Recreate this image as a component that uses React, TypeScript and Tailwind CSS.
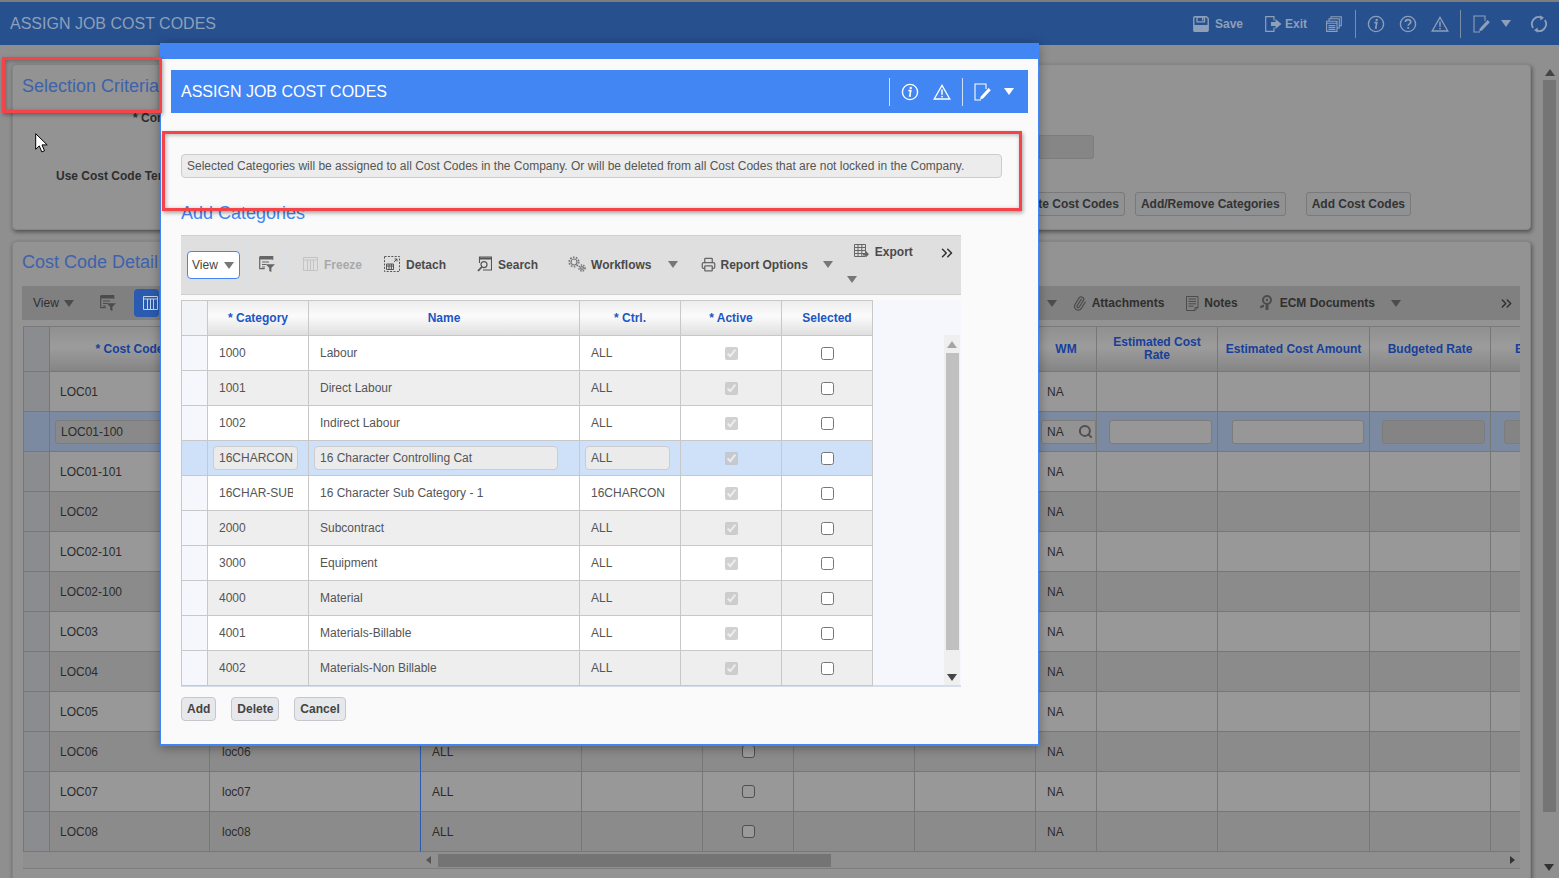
import type { ReactNode } from "react";
import { ChevronsRight, Search as SearchIcon, Paperclip, Printer } from "lucide-react";

const CATEGORIES = [
  { code: "1000", name: "Labour", ctrl: "ALL" },
  { code: "1001", name: "Direct Labour", ctrl: "ALL" },
  { code: "1002", name: "Indirect Labour", ctrl: "ALL" },
  { code: "16CHARCON", name: "16 Character Controlling Cat", ctrl: "ALL", editing: true },
  { code: "16CHAR-SUB", name: "16 Character Sub Category - 1", ctrl: "16CHARCON" },
  { code: "2000", name: "Subcontract", ctrl: "ALL" },
  { code: "3000", name: "Equipment", ctrl: "ALL" },
  { code: "4000", name: "Material", ctrl: "ALL" },
  { code: "4001", name: "Materials-Billable", ctrl: "ALL" },
  { code: "4002", name: "Materials-Non Billable", ctrl: "ALL" },
];

const COST_CODES = [
  "LOC01",
  "LOC01-100",
  "LOC01-101",
  "LOC02",
  "LOC02-101",
  "LOC02-100",
  "LOC03",
  "LOC04",
  "LOC05",
  "LOC06",
  "LOC07",
  "LOC08",
];

const BG_COLS =
  "grid grid-cols-[27px_160px_211px_161px_121px_91px_121px_121px_61px_121px_152px_121px_30px]";
const MODAL_COLS = "grid grid-cols-[27px_101px_271px_101px_101px_91px]";

function Caret({ className = "" }: { className?: string }) {
  return (
    <span
      className={
        "inline-block h-0 w-0 border-x-[5px] border-t-[7px] border-x-transparent " + className
      }
    />
  );
}

function InfoGlyph({ color }: { color: string }) {
  return (
    <svg width="18" height="18" viewBox="0 0 18 18" fill="none">
      <circle cx="9" cy="9" r="7.6" stroke={color} strokeWidth="1.4" />
      <path d="M7.4 7.6h2.4L8.7 13h1.2" stroke={color} strokeWidth="1.6" />
      <circle cx="9.7" cy="4.9" r="1.2" fill={color} />
    </svg>
  );
}

function HelpGlyph({ color }: { color: string }) {
  return (
    <svg width="18" height="18" viewBox="0 0 18 18" fill="none">
      <circle cx="9" cy="9" r="7.6" stroke={color} strokeWidth="1.4" />
      <path d="M6.4 7c0-3.2 5.4-3.2 5.4 0 0 2-2.6 1.8-2.6 3.8" stroke={color} strokeWidth="1.7" />
      <circle cx="9.2" cy="13" r="1.1" fill={color} />
    </svg>
  );
}

function WarnGlyph({ color }: { color: string }) {
  return (
    <svg width="18" height="16" viewBox="0 0 18 16" fill="none">
      <path d="M9 1.4 16.8 15H1.2Z" stroke={color} strokeWidth="1.3" />
      <path d="M9 5.5v5.2" stroke={color} strokeWidth="1.5" />
      <circle cx="9" cy="12.6" r=".9" fill={color} />
    </svg>
  );
}

function EditGlyph({ color }: { color: string }) {
  return (
    <svg width="18" height="18" viewBox="0 0 18 18" fill="none">
      <path d="M12 6V1H1v16h6" stroke={color} strokeWidth="1.1" />
      <path d="M6 16.5l1-3.2L14.6 5l2.2 2.2L9 15.5Z" fill={color} />
    </svg>
  );
}

function SaveGlyph({ color }: { color: string }) {
  return (
    <svg width="16" height="16" viewBox="0 0 16 16" fill="none">
      <path d="M.8 1.8a1 1 0 0 1 1-1h11.6l1.8 1.8v11.6a1 1 0 0 1-1 1H1.8a1 1 0 0 1-1-1Z" stroke={color} strokeWidth="1.4" />
      <path d="M4 1h7.5v4.8H4Z" stroke={color} strokeWidth="1.3" />
      <path d="M9 2h1.4v2.6H9Z" fill={color} />
      <path d="M1 9h14v6.5H1Z" fill={color} />
    </svg>
  );
}

function ExitGlyph({ color }: { color: string }) {
  return (
    <svg width="17" height="16" viewBox="0 0 17 16" fill="none">
      <path d="M9 4.5V.7H.7v14.6H9v-3.8" stroke={color} strokeWidth="1.2" />
      <path d="M6 6h4.5V3l6 5-6 5v-3H6Z" fill={color} />
    </svg>
  );
}

function WindowsGlyph({ color }: { color: string }) {
  return (
    <svg width="16" height="16" viewBox="0 0 16 16" fill="none" stroke={color} strokeWidth="1.1">
      <path d="M5 3V.7h10.3v9H13" />
      <path d="M3 5V2.8h10.3V12H11" />
      <path d="M.6 5.2H11v10.2H.6Z" />
      <path d="M.6 7.2H11M2.4 9.6h7M2.4 11.5h7M2.4 13.4h7" />
    </svg>
  );
}

function RefreshGlyph({ color }: { color: string }) {
  return (
    <svg width="18" height="18" viewBox="0 0 18 18" fill="none">
      <path d="M3.2 13A7 7 0 0 1 11 2.3" stroke={color} strokeWidth="1.8" />
      <path d="M14.8 5A7 7 0 0 1 7 15.7" stroke={color} strokeWidth="1.8" />
      <path d="M10 .2 14 2.8 10.4 5.4Z" fill={color} />
      <path d="M8 17.8 4 15.2l3.6-2.6Z" fill={color} />
    </svg>
  );
}

function FilterGlyph({ color }: { color: string }) {
  return (
    <svg width="16" height="16" viewBox="0 0 16 16" fill="none">
      <path d="M.7.7h13v3M.7.7v12h5" stroke={color} strokeWidth="1.2" />
      <path d="M.7 1h13v2.5H.7Z" fill={color} />
      <path d="M3 6h7M3 8.5h4M3 11h3" stroke={color} strokeWidth="1.2" />
      <path d="M6.5 8.2H16l-3.6 3.6V16l-2.2-1v-3.2Z" fill={color} />
    </svg>
  );
}

function FreezeGlyph({ color }: { color: string }) {
  return (
    <svg width="15" height="14" viewBox="0 0 15 14" fill="none" stroke={color}>
      <path d="M.5.5h14v13H.5Z" />
      <path d="M.5 3h14M4.5 3v10.5M7.5 3v10.5M10.5 3v10.5" />
    </svg>
  );
}

function DetachGlyph() {
  return (
    <svg width="16" height="16" viewBox="0 0 16 16" fill="none" stroke="#555">
      <path d="M.5.5h15v15H.5Z" strokeDasharray="2 1.4" />
      <path d="M2.5 8h7v5.5h-7ZM2.5 10h7M5 8v5.5M7.4 8v5.500" />
      <path d="M10 6l3-3M10.5 3H13v2.5" />
    </svg>
  );
}

function SearchGlyph() {
  return (
    <svg width="15" height="16" viewBox="0 0 15 16" fill="none" stroke="#555">
      <path d="M2.5 7V1h12v13H6" strokeWidth="1.1" />
      <path d="M2.5 2.5h12" strokeWidth="2" />
      <circle cx="7" cy="8.6" r="3" strokeWidth="1.2" />
      <path d="M4.8 11 1 15" strokeWidth="1.8" />
    </svg>
  );
}

function GearsGlyph() {
  return (
    <svg width="18" height="16" viewBox="0 0 18 16" fill="none" stroke="#777">
      <circle cx="6" cy="6" r="3" strokeWidth="1.2" />
      <circle cx="6" cy="6" r="4.8" strokeWidth="1.6" strokeDasharray="1.6 1.4" />
      <circle cx="14" cy="12" r="1.4" strokeWidth="1.2" />
      <circle cx="14" cy="12" r="3" strokeWidth="1.6" strokeDasharray="1.4 1.1" />
    </svg>
  );
}

function ExportGlyph() {
  return (
    <svg width="15" height="14" viewBox="0 0 15 14" fill="none" stroke="#666">
      <path d="M.5.5h11v12H.5Z" />
      <path d="M.5 3.5h11M.5 6.5h11M.5 9.5h11M4 .5v12M7.8 .5v12" />
      <path d="M9 9h3V7l3 3.2-3 3v-1.7H9Z" fill="#666" stroke="none" />
    </svg>
  );
}

function NotesGlyph({ color }: { color: string }) {
  return (
    <svg width="13" height="15" viewBox="0 0 13 15" fill="none" stroke={color}>
      <path d="M.5.5H12v11l-3 3H.5ZM2.5 3H10M2.5 5.4H10M2.5 7.8H10M2.5 10.2h5M9 14.5v-3h3" />
    </svg>
  );
}

function EcmGlyph({ color }: { color: string }) {
  return (
    <svg width="15" height="16" viewBox="0 0 15 16" fill="none">
      <circle cx="8" cy="5" r="4" stroke={color} strokeWidth="2" />
      <circle cx="8" cy="5" r="1.2" fill={color} />
      <path d="M6.5 8.5h3V15h-3Z" fill={color} />
      <path d="M1 11l4-1.5V12l-3.500 1.500Z" fill={color} />
    </svg>
  );
}

function ToolText({ children, muted = false }: { children: ReactNode; muted?: boolean }) {
  return (
    <span className={"text-xs font-bold whitespace-nowrap " + (muted ? "text-[#a9a9a9]" : "text-[#4a4a4a]")}>
      {children}
    </span>
  );
}

function TopBar() {
  const c = "#8e9fb9";
  return (
    <header className="flex h-[45px] items-center border-t-2 border-[#7d7d7d] bg-[#27508f] pl-[10px] text-[#8e9fb9]">
      <span className="text-base leading-none">ASSIGN JOB COST CODES</span>
      <div className="ml-auto flex items-center pr-[11px]">
        <SaveGlyph color={c} />
        <span className="ml-[6px] text-xs font-bold">Save</span>
        <span className="ml-[22px]"><ExitGlyph color={c} /></span>
        <span className="ml-[3px] text-xs font-bold">Exit</span>
        <span className="ml-[19px]"><WindowsGlyph color={c} /></span>
        <span className="ml-[13px] h-[28px] w-px bg-[#7c8ea9]" />
        <span className="ml-[11px]"><InfoGlyph color={c} /></span>
        <span className="ml-[14px]"><HelpGlyph color={c} /></span>
        <span className="ml-[14px]"><WarnGlyph color={c} /></span>
        <span className="ml-[11px] h-[28px] w-px bg-[#7c8ea9]" />
        <span className="ml-[12px]"><EditGlyph color={c} /></span>
        <Caret className="ml-[10px] border-t-[#8e9fb9]" />
        <span className="ml-[19px]"><RefreshGlyph color={c} /></span>
      </div>
    </header>
  );
}

function BgButton({ children, className = "" }: { children: ReactNode; className?: string }) {
  return (
    <span className={"flex h-[24px] items-center rounded-[3px] border border-[#7a7a7a] bg-[#8f9192] px-[5px] text-xs font-bold whitespace-nowrap text-[#333] " + className}>
      {children}
    </span>
  );
}

function SelectionPanel() {
  return (
    <section className="h-[166px] rounded-sm border border-[#858585] bg-[#939393] pl-[9px] shadow-[1px_2px_4px_rgba(0,0,0,0.45)]">
      <h2 className="pt-[10px] text-lg leading-[22px] text-[#3e62ab]">Selection Criteria</h2>
      <p className="mt-[14px] pl-[111px] text-xs leading-[14px] font-bold text-[#2e2e2e]">* Company</p>
      <div className="mt-[10px] ml-[1017px] h-[24px] w-[55px] rounded-r-[3px] border border-[#7d7d7d] bg-[#868686]" />
      <div className="mt-[10px] pl-[34px] text-xs leading-[14px] font-bold text-[#2e2e2e]">Use Cost Code Template</div>
      <div className="mt-[9px] flex items-center justify-end pr-[119px]">
        <BgButton>Delete Cost Codes</BgButton>
        <BgButton className="ml-[10px]">Add/Remove Categories</BgButton>
        <BgButton className="ml-[20px]">Add Cost Codes</BgButton>
      </div>
    </section>
  );
}

function DetailToolbar() {
  const c = "#4c4c4c";
  return (
    <div className="flex h-[34px] items-center bg-[#808080] pl-[11px] pr-[5px] text-[#2f2f2f]">
      <span className="text-xs">View</span>
      <Caret className="ml-[5px] border-t-[#4c4c4c]" />
      <span className="ml-[26px]"><FilterGlyph color={c} /></span>
      <span className="ml-[18px] flex h-[28px] w-[25px] items-center justify-center rounded-[4px] bg-[#2a5bb0] pl-[8px]">
        <FreezeGlyph color="#c8d4e8" />
      </span>
      <div className="ml-auto flex items-center">
        <Caret className="border-t-[#4c4c4c]" />
        <Paperclip size={15} color={c} className="ml-[15px] -rotate-12" />
        <span className="ml-[5px] text-xs font-bold">Attachments</span>
        <span className="ml-[22px]"><NotesGlyph color={c} /></span>
        <span className="ml-[5px] text-xs font-bold">Notes</span>
        <span className="ml-[21px]"><EcmGlyph color={c} /></span>
        <span className="ml-[6px] text-xs font-bold">ECM Documents</span>
        <Caret className="ml-[16px] border-t-[#4c4c4c]" />
        <ChevronsRight size={17} strokeWidth={2} color="#2f2f2f" className="ml-[97px]" />
      </div>
    </div>
  );
}

function DetailTable() {
  // columns 2-7 sit under the dialog, only the first label shows past its edge
  const headers = ["", "* Cost Code", "", "", "", "", "", "", "WM", "Estimated Cost Rate", "Estimated Cost Amount", "Budgeted Rate", "E"];
  return (
    <div className="mt-[6px] ml-px overflow-hidden border-t border-[#7a7a7a]">
      <div className={BG_COLS + " h-[45px] bg-[linear-gradient(#909090,#9c9c9c_45%,#848484)]"}>
        {headers.map((h, i) => (
          <div
            key={i}
            className={
              "flex items-center overflow-hidden border-r border-b border-[#777] text-center text-xs leading-[13px] font-bold text-[#17409a] " +
              (i === 0 ? "border-l bg-[#8b8c8f] " : "") +
              (i === 12 ? "justify-start border-r-0 pl-[24px]" : i === 9 ? "justify-center px-[8px]" : "justify-center")
            }
          >
            {h}
          </div>
        ))}
      </div>
      {COST_CODES.map((code, r) => {
        const selected = r === 1;
        const rowBg = selected ? "bg-[#7b8aa1]" : [0, 2, 4, 6, 8, 10].includes(r) ? "bg-[#989898]" : "bg-[#8b8b8b]";
        const uncovered = r >= 9;
        return (
          <div key={code} className={BG_COLS + " h-[40px] text-xs text-[#2b2b2b] " + rowBg}>
            <div className={"border-r border-b border-l border-[#777] " + (selected ? "" : "bg-[#8b8c8f]")} />
            <div className="flex items-center border-r border-b border-[#777] pl-[10px]">
              {selected ? (
                <span className="ml-[-5px] flex h-[24px] w-[150px] items-center rounded-[3px] border border-[#7c7c7c] bg-[#898989] pl-[5px]">{code}</span>
              ) : (
                code
              )}
            </div>
            <div className={"flex items-center border-b border-[#777] pl-[12px] " + (r > 1 ? "border-r border-r-[#2a5bb0]" : "border-r")}>
              {uncovered && code.replace("LOC", "loc")}
            </div>
            <div className="flex items-center border-r border-b border-[#777] pl-[11px]">{uncovered && "ALL"}</div>
            <div className="border-r border-b border-[#777]" />
            <div className="flex items-center justify-center border-r border-b border-[#777]">
              <span className="h-[13px] w-[13px] rounded-[3px] border border-[#4f4f4f] bg-[#9a9a9a]" />
            </div>
            <div className="border-r border-b border-[#777]" />
            <div className="border-r border-b border-[#777]" />
            <div className="flex items-center border-r border-b border-[#777] pl-[11px]">
              {selected ? (
                <span className="ml-[-6px] flex h-[24px] w-[57px] items-center justify-between rounded-l-[3px] border border-[#7c7c7c] bg-[#939393] pr-[2px] pl-[5px]">
                  NA <SearchIcon size={15} strokeWidth={3.2} color="#4f4f4f" />
                </span>
              ) : (
                "NA"
              )}
            </div>
            <div className="flex items-center justify-center border-r border-b border-[#777] pl-[6px]">
              {selected && <span className="h-[24px] w-[103px] rounded-[3px] border border-[#7c7c7c] bg-[#979797]" />}
            </div>
            <div className="flex items-center justify-center border-r border-b border-[#777] pl-[8px]">
              {selected && <span className="h-[24px] w-[132px] rounded-[3px] border border-[#7c7c7c] bg-[#979797]" />}
            </div>
            <div className="flex items-center justify-center border-r border-b border-[#777] pl-[6px]">
              {selected && <span className="h-[24px] w-[103px] rounded-[3px] border border-[#7c7c7c] bg-[#848484]" />}
            </div>
            <div className="flex items-center border-b border-[#777] pl-[13px]">
              {selected && <span className="h-[24px] w-[30px] rounded-l-[3px] border border-[#7c7c7c] bg-[#848484]" />}
            </div>
          </div>
        );
      })}
      <div className="flex h-[17px] items-center border-b border-[#7d7d7d] bg-[#8f8f8f]">
        <span className="ml-[403px] h-0 w-0 border-y-[4px] border-r-[5px] border-y-transparent border-r-[#555]" />
        <span className="ml-[7px] h-[13px] w-[393px] bg-[#747474]" />
        <span className="mr-[5px] ml-auto h-0 w-0 border-y-[4px] border-l-[5px] border-y-transparent border-l-[#333]" />
      </div>
    </div>
  );
}

function DetailPanel() {
  return (
    <section className="mt-[11px] h-[640px] rounded-sm border border-[#858585] bg-[#939393] pr-[10px] pl-[9px] shadow-[1px_2px_4px_rgba(0,0,0,0.45)]">
      <h2 className="pt-[9px] pb-[13px] text-lg leading-[22px] text-[#3e62ab]">Cost Code Detail</h2>
      <DetailToolbar />
      <DetailTable />
    </section>
  );
}

function PageScrollbar() {
  return (
    <aside className="relative flex-1 bg-[#8f8f8f]">
      <Caret className="absolute top-[24px] left-[2px] rotate-180 border-x-[4px] border-t-[5px] border-t-[#444]" />
      <div className="mt-[35px] h-[732px] w-[13px] bg-[#757575]" />
      <Caret className="absolute right-[5px] bottom-[7px] border-x-[4px] border-t-[5px] border-t-[#333]" />
    </aside>
  );
}

function ModalHeader() {
  return (
    <div className="mx-[10px] mt-[11px] flex h-[43px] items-center bg-[#4286f4] pl-[10px] text-white">
      <span className="text-base leading-none">ASSIGN JOB COST CODES</span>
      <div className="ml-auto flex items-center pr-[14px]">
        <span className="h-[28px] w-px bg-[#cfe0fb]" />
        <span className="ml-[11px]"><InfoGlyph color="#fff" /></span>
        <span className="ml-[14px]"><WarnGlyph color="#fff" /></span>
        <span className="ml-[11px] h-[28px] w-px bg-[#cfe0fb]" />
        <span className="ml-[11px]"><EditGlyph color="#fff" /></span>
        <Caret className="ml-[12px] border-t-white" />
      </div>
    </div>
  );
}

function ModalToolbar() {
  return (
    <div className="flex h-[60px] w-[780px] items-center border-t border-b border-[#cfcfcf] bg-[#dfdfdf] pb-[2px] pl-[6px]">
      <span className="mt-[2px] flex h-[28px] w-[53px] items-center rounded-[4px] border border-[#4286f4] bg-white pl-[4px] text-xs text-[#444]">
        View
        <Caret className="ml-[6px] border-t-[#777]" />
      </span>
      <span className="ml-[6px] h-[56px] w-px bg-[#d8dfe8]" />
      <span className="ml-[12px]"><FilterGlyph color="#666" /></span>
      <span className="ml-[11px] h-[28px] w-px bg-[#d8dfe8]" />
      <span className="ml-[16px]"><FreezeGlyph color="#c4c4c4" /></span>
      <span className="ml-[6px]"><ToolText muted>Freeze</ToolText></span>
      <span className="ml-[22px]"><DetachGlyph /></span>
      <span className="ml-[6px]"><ToolText>Detach</ToolText></span>
      <span className="ml-[15px] h-[56px] w-px bg-[#d8dfe8]" />
      <span className="ml-[15px]"><SearchGlyph /></span>
      <span className="ml-[6px]"><ToolText>Search</ToolText></span>
      <span className="ml-[15px] h-[56px] w-px bg-[#d8dfe8]" />
      <span className="ml-[14px]"><GearsGlyph /></span>
      <span className="ml-[5px]"><ToolText>Workflows</ToolText></span>
      <Caret className="ml-[16px] border-t-[#777]" />
      <Printer size={15} color="#666" className="ml-[23px]" />
      <span className="ml-[5px]"><ToolText>Report Options</ToolText></span>
      <Caret className="ml-[15px] border-t-[#777]" />
      <div className="ml-[19px] flex h-full flex-col items-start pt-[8px] pl-[2px]">
        <div className="flex h-[14px] items-center">
          <ExportGlyph />
          <span className="ml-[6px]"><ToolText>Export</ToolText></span>
        </div>
        <Caret className="mt-[18px] -ml-[7px] border-t-[#777]" />
      </div>
      <ChevronsRight size={18} strokeWidth={2} color="#333" className="mb-[22px] ml-[25px]" />
    </div>
  );
}

function ModalTable() {
  const headers = ["", "* Category", "Name", "* Ctrl.", "* Active", "Selected"];
  return (
    <div className="mt-[5px] flex h-[387px] w-[780px] border-b-2 border-[#d5dde8] bg-[#f5f7fc]">
      <div className="w-[692px]">
        <div className={MODAL_COLS + " h-[36px] bg-[linear-gradient(#ececec,#fbfbfb_45%,#dedede)]"}>
          {headers.map((h, i) => (
            <div
              key={i}
              className={
                "flex items-center justify-center border-t border-r border-b border-[#c8c8c8] text-xs font-bold text-[#1a56c4] " +
                (i === 0 ? "border-l bg-[#f2f3f7]" : "")
              }
            >
              {h}
            </div>
          ))}
        </div>
        {CATEGORIES.map((cat, r) => {
          const bg = cat.editing ? "bg-[#cfe0f9]" : r % 2 === 0 ? "bg-white" : "bg-[#eeeeee]";
          return (
            <div key={cat.code} className={MODAL_COLS + " h-[35px] text-xs text-[#555] " + bg}>
              <div className={"border-r border-b border-l border-[#c8c8c8] " + (cat.editing ? "" : "bg-[#f5f7fc]")} />
              <div className="flex items-center border-r border-b border-[#c8c8c8] pl-[11px]">
                {cat.editing ? (
                  <span className="-ml-[6px] flex h-[24px] w-[85px] items-center rounded-[4px] border border-[#cccccc] bg-[#ebebeb] pl-[5px]">{cat.code}</span>
                ) : (
                  <span className="w-[74px] overflow-hidden whitespace-nowrap">{cat.code}</span>
                )}
              </div>
              <div className="flex items-center border-r border-b border-[#c8c8c8] pl-[11px]">
                {cat.editing ? (
                  <span className="-ml-[6px] flex h-[24px] w-[244px] items-center rounded-[4px] border border-[#cccccc] bg-[#ebebeb] pl-[5px]">{cat.name}</span>
                ) : (
                  cat.name
                )}
              </div>
              <div className="flex items-center border-r border-b border-[#c8c8c8] pl-[11px]">
                {cat.editing ? (
                  <span className="-ml-[6px] flex h-[24px] w-[85px] items-center rounded-[4px] border border-[#cccccc] bg-[#ebebeb] pl-[5px]">{cat.ctrl}</span>
                ) : (
                  cat.ctrl
                )}
              </div>
              <div className="flex items-center justify-center border-r border-b border-[#c8c8c8]">
                <input type="checkbox" checked disabled readOnly className="h-[13px] w-[13px]" />
              </div>
              <div className="flex items-center justify-center border-r border-b border-[#c8c8c8]">
                <input type="checkbox" readOnly className="h-[13px] w-[13px]" />
              </div>
            </div>
          );
        })}
      </div>
      <div className="mt-[35px] ml-[71px] flex w-[16px] flex-col items-center bg-[#efefef]">
        <Caret className="mt-[6px] rotate-180 border-x-[3px] border-t-[4px] border-t-[#a5a5a5]" />
        <div className="mt-[5px] h-[297px] w-[13px] bg-[#c0c0c0]" />
        <Caret className="mt-[24px] border-x-[3px] border-t-[4px] border-t-[#444]" />
      </div>
    </div>
  );
}

function ModalButton({ children, className = "" }: { children: ReactNode; className?: string }) {
  return (
    <span className={"flex h-[24px] items-center rounded-[4px] border border-[#c4c8cc] bg-[#e6e8eb] px-[5px] text-xs font-bold text-[#444] " + className}>
      {children}
    </span>
  );
}

function Modal() {
  return (
    <div className="absolute top-[43px] left-[160px] h-[703px] w-[879px] border-x border-b-2 border-[#4286f4] bg-[#fafafa] shadow-[0_2px_10px_rgba(0,0,0,0.35)]">
      <div className="h-[16px] bg-[#4286f4]" />
      <ModalHeader />
      <div className="pl-[20px]">
        <div className="mt-[41px] flex h-[24px] w-[821px] items-center rounded-[4px] border border-[#cccccc] bg-[#ececec] pl-[5px] text-xs text-[#555]">
          Selected Categories will be assigned to all Cost Codes in the Company. Or will be deleted from all Cost Codes that are not locked in the Company.
        </div>
        <h3 className="mt-[24px] mb-[11px] text-lg leading-[22px] text-[#4286f4]">Add Categories</h3>
        <ModalToolbar />
        <ModalTable />
        <div className="mt-[10px] flex items-center">
          <ModalButton>Add</ModalButton>
          <ModalButton className="ml-[15px]">Delete</ModalButton>
          <ModalButton className="ml-[15px]">Cancel</ModalButton>
        </div>
      </div>
    </div>
  );
}

export default function App() {
  return (
    <div className="relative h-[878px] w-[1559px] overflow-hidden bg-[#8f8f8f] font-['Liberation_Sans',Arial,sans-serif]">
      <TopBar />
      <div className="flex h-[833px]">
        <main className="w-[1531px] pt-[19px] pl-[12px]">
          <SelectionPanel />
          <DetailPanel />
        </main>
        <div className="w-[12px]" />
        <PageScrollbar />
      </div>
      <Modal />
      {/* red call-out boxes drawn on top of the screenshot */}
      <div className="absolute top-[57px] left-[2px] h-[56px] w-[160px] border-[3px] border-[#f4444a] shadow-[1px_2px_4px_rgba(0,0,0,0.35),inset_1px_1px_4px_rgba(0,0,0,0.3)]" />
      <div className="absolute top-[131px] left-[162px] h-[80px] w-[860px] border-[3px] border-[#f4444a] shadow-[1px_2px_4px_rgba(0,0,0,0.35),inset_1px_1px_4px_rgba(0,0,0,0.3)]" />
      <svg className="absolute top-[133px] left-[35px]" width="13" height="20" viewBox="0 0 13 20">
        <path d="M.7.7v15.6l3.6-3.4 2.5 6 2.7-1.100-2.500-5.900h5.200Z" fill="#fff" stroke="#000" strokeWidth="1" />
      </svg>
    </div>
  );
}
